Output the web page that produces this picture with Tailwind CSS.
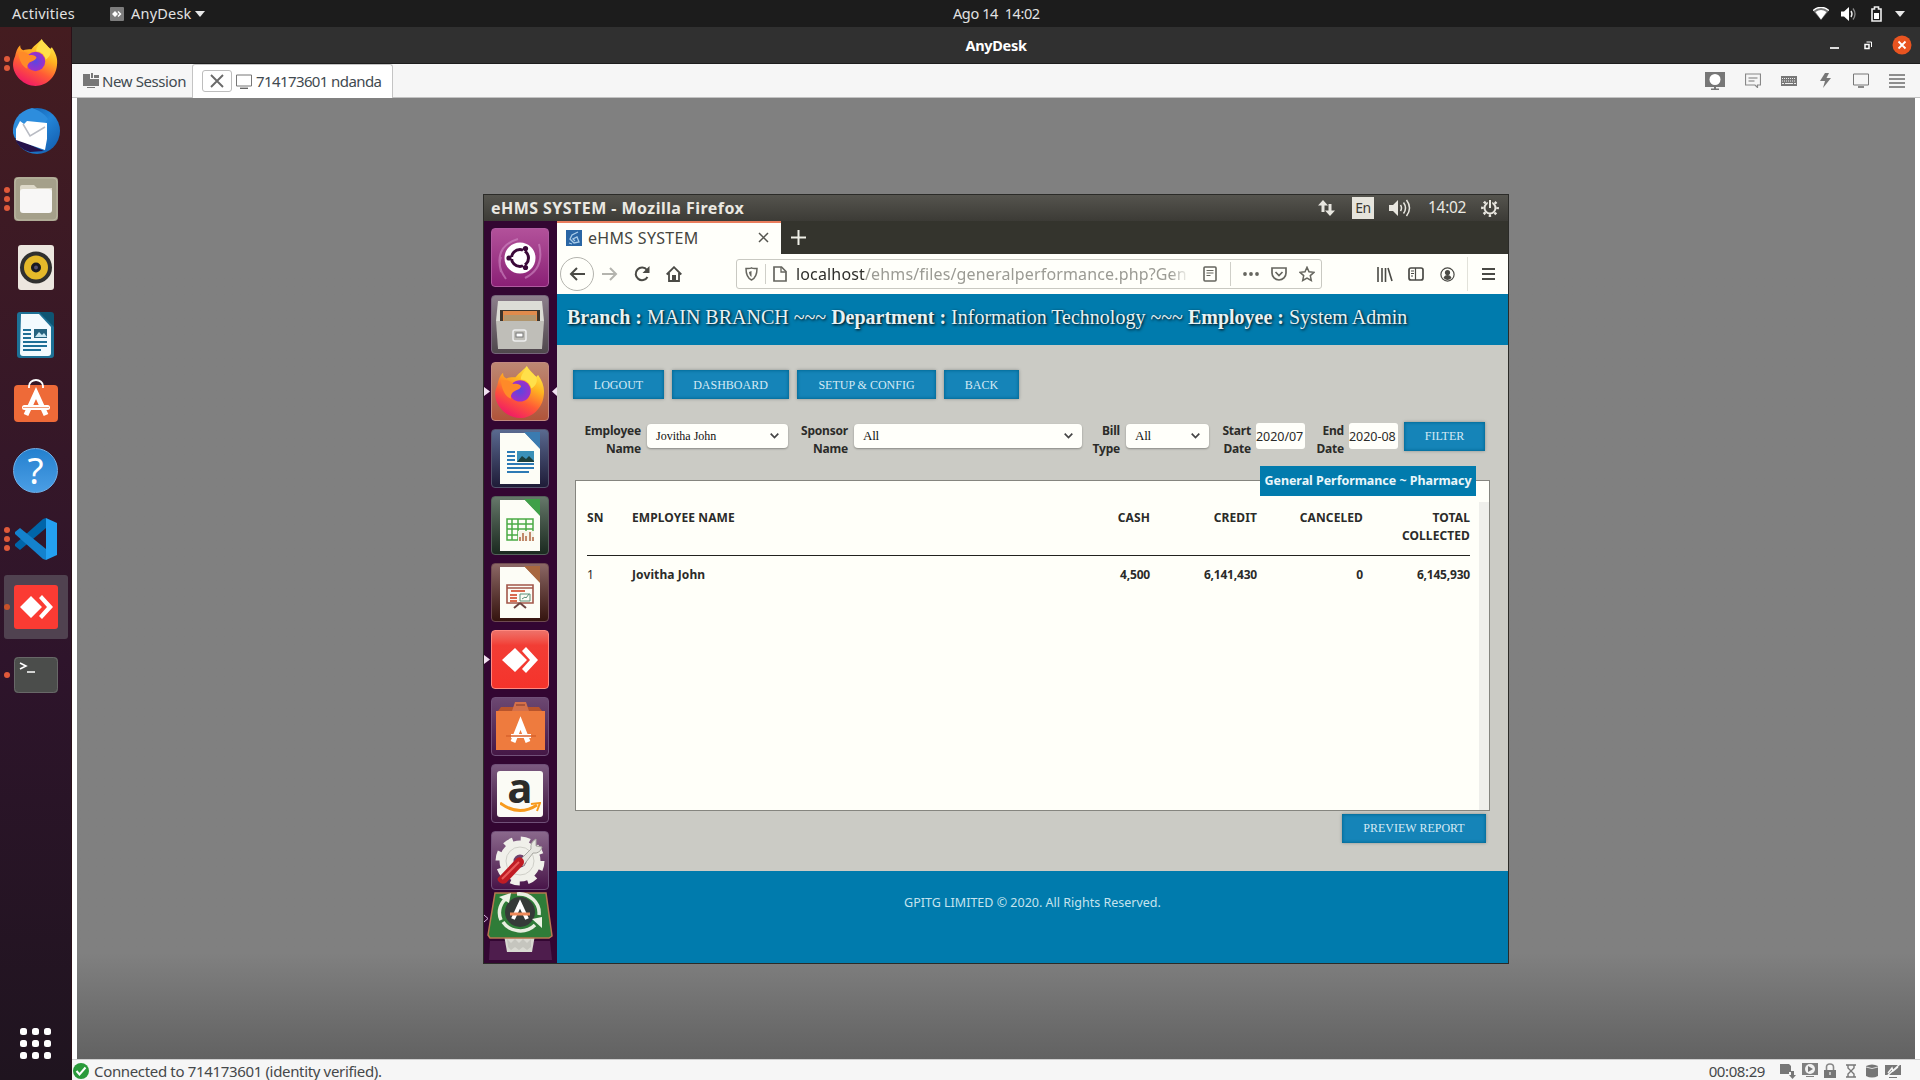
<!DOCTYPE html>
<html lang="en">
<head>
<meta charset="utf-8">
<title>AnyDesk</title>
<script src="https://cdn.jsdelivr.net/npm/@tailwindcss/browser@4"></script>
</head>
<body class="w-[1920px] h-[1080px] overflow-hidden flex flex-col bg-[#1c1c1c] font-['Noto_Sans',sans-serif] text-[15px] whitespace-nowrap">
<svg width="0" height="0" class="absolute">
  <defs>
    <linearGradient id="ffa" x1=".8" y1="0" x2=".3" y2="1"><stop offset="0" stop-color="#fff44f"/><stop offset=".35" stop-color="#ffb320"/><stop offset=".65" stop-color="#ff5a36"/><stop offset="1" stop-color="#f0156a"/></linearGradient>
    <radialGradient id="ffb"><stop offset="0" stop-color="#5b46e0"/><stop offset="1" stop-color="#a02fc8"/></radialGradient>
    <linearGradient id="tb" x1="0" y1="0" x2="1" y2="1"><stop offset="0" stop-color="#0a4f9e"/><stop offset=".5" stop-color="#2385d8"/><stop offset="1" stop-color="#1258a8"/></linearGradient>
    <symbol id="firefox" viewBox="0 0 44 46">
      <path d="M2 17C3 12 4 9 7 6c0 3 1 4 3 5 2-1 5-1 8-1C21 6 26 3 28 0c2 4 6 6 8 10l2-2c4 6 6 11 5 18-1 11-10 20-21 20S0 36 0 25c0-3 1-6 2-8z" fill="url(#ffa)"/>
      <circle cx="22" cy="22" r="9.500" fill="url(#ffb)"/>
      <path d="M5 13c5-1 9 0 11 3 3-1 6 0 7 2-1 3-4 3-7 5-2 2-2 3-2 6-5-2-8-8-9-16z" fill="#ff8a28"/>
      <path d="M28 1c-3 5-6 8-5 11 4 0 8 3 9 8 5-3 6-8 4-11-3-2-6-5-8-8z" fill="#ffe04a"/>
    </symbol>
  </defs>
</svg>

<!-- GNOME top bar -->
<header class="h-[27px] shrink-0 flex items-center text-[#e2e2e2] text-[14.5px] relative">
  <span class="ml-3 w-[98px] tracking-[0.25px]">Activities</span>
  <svg class="w-[14px] h-[14px]" viewBox="0 0 14 14"><rect width="14" height="14" rx="1" fill="#7d7d7d"/><path d="M2 7l3-3 3 3-3 3zM8.500 4l3 3-3 3-1-1 2-2-2-2z" fill="#fff"/></svg>
  <span class="ml-[7px] w-[57px] tracking-[0.2px]">AnyDesk</span>
  <svg class="ml-[7px] w-[10px] h-[6px]" viewBox="0 0 10 6"><path d="M0 0h10L5 6z" fill="#e8e8e8"/></svg>
  <span class="ml-[748px] tracking-[-0.4px] whitespace-pre">Ago 14  14:02</span>
  <div class="ml-auto flex items-center pr-[15px]">
    <svg class="w-4 h-[13px]" viewBox="0 0 16 13"><path d="M0 3.500Q8-3 16 3.500L8 13z" fill="#777"/><path d="M2.500 5Q8 1 13.500 5L8 12.500z" fill="#fff"/><path d="M0 3.500Q8-3 16 3.500" stroke="#fff" stroke-width="1.300" fill="none"/></svg>
    <svg class="ml-3 w-4 h-[14px]" viewBox="0 0 16 14"><path d="M0 4.500h3L8 0v14L3 9.500H0z" fill="#fff"/><path d="M10 4q2 3 0 6" stroke="#eee" stroke-width="1.400" fill="none"/><path d="M12 1.500q4 5.500 0 11" stroke="#888" stroke-width="1.300" fill="none"/></svg>
    <svg class="ml-[14px] w-[11px] h-4" viewBox="0 0 11 16"><path d="M1 3h2.500V1h4v2H10v12H1z" fill="none" stroke="#eee" stroke-width="1.600"/><path d="M3 7h5v6H3z" fill="#fff"/></svg>
    <svg class="ml-[13px] w-[10px] h-[6px]" viewBox="0 0 10 6"><path d="M0 0h10L5 6z" fill="#e8e8e8"/></svg>
  </div>
</header>

<div class="flex-1 flex min-h-0">
  <!-- Dock -->
  <nav class="w-[72px] shrink-0 pt-[1px] flex flex-col items-center bg-linear-to-b from-[#441c20] via-[#2e142b] via-60% to-[#1f141f] border-r border-[#2a1018]">
    <div class="relative w-full h-[68px] flex items-center justify-center"><i class="absolute left-[4px] top-[28px] w-[6px] h-[6px] rounded-full bg-[#e0593a]"></i><i class="absolute left-[4px] top-[37px] w-[6px] h-[6px] rounded-full bg-[#e0593a]"></i>
      <svg class="w-[45px] h-[47px]"><use href="#firefox"/></svg></div>
    <div class="w-full h-[68px] flex items-center justify-center">
      <svg class="w-12 h-12 mt-[2px]" viewBox="0 0 48 48"><circle cx="25" cy="24" r="23" fill="url(#tb)"/><path d="M20 1C6 4 0 15 1 26c2 8 7 12 12 15L36 12C32 6 26 3 20 1z" fill="#2d8ddd"/><path d="M3 31q3 11 15 14l14-1z" fill="#25124a"/><path d="M8 14l4 3 3-3 20 2v16l-2 11L4 33V22z" fill="#fff"/><path d="M11 17l7 12 15-9" fill="none" stroke="#b9bcc4" stroke-width="1.500"/></svg></div>
    <div class="relative w-full h-[68px] flex items-center justify-center"><i class="absolute left-[4px] top-[23px] w-[6px] h-[6px] rounded-full bg-[#e0593a]"></i><i class="absolute left-[4px] top-[32px] w-[6px] h-[6px] rounded-full bg-[#e0593a]"></i><i class="absolute left-[4px] top-[41px] w-[6px] h-[6px] rounded-full bg-[#e0593a]"></i>
      <svg class="w-11 h-11 mt-[2px]" viewBox="0 0 44 44"><rect width="44" height="44" rx="4" fill="#a5a08a"/><rect x="1" y="1" width="42" height="42" rx="4" fill="none" stroke="#bcb8a4"/><path d="M6 10q0-2 2-2h12l3 3h15v6H6z" fill="#ddd8c8"/><rect x="6" y="12" width="32" height="24" rx="3" fill="#f8f7f6"/></svg></div>
    <div class="w-full h-[68px] flex items-center justify-center">
      <svg class="w-9 h-[45px] mt-[2px]" viewBox="0 0 36 45"><rect width="36" height="45" rx="3" fill="#ece6df"/><circle cx="18" cy="22.500" r="16" fill="#30302f"/><circle cx="18" cy="22.500" r="12" fill="#e5b92a"/><circle cx="18" cy="22.500" r="5" fill="#1a1a22"/><circle cx="18" cy="22.500" r="2" fill="#54506e"/></svg></div>
    <div class="w-full h-[68px] flex items-center justify-center">
      <svg class="w-[37px] h-[46px] mt-px" viewBox="0 0 37 46"><path d="M3 0h20l14 14v29q0 3-3 3H3q-3 0-3-3V3q0-3 3-3z" fill="#1d7196"/><path d="M4 2h18l12 13v26q0 3-3 3H6q-3 0-3-3z" fill="#f2fafe"/><path d="M22 0l15 15V3q0-3-3-3z" fill="#0e5472"/><path d="M6 18h8M6 22h8M6 26h8M6 30h24M6 34h24M6 38h18" stroke="#1f6f96" stroke-width="2"/><rect x="17" y="17" width="13" height="9" fill="#24627e"/><path d="M18 25l4-5 3 3 2-2 3 4z" fill="#c8e6f0"/></svg></div>
    <div class="w-full h-[68px] flex items-center justify-center">
      <svg class="w-11 h-[43px] mb-[4px]" viewBox="0 0 44 43"><rect y="6" width="44" height="37" rx="4" fill="#ee6a38"/><path d="M15 9V7a7 6 0 0 1 14 0v2" fill="none" stroke="#fff" stroke-width="1.800"/><path d="M12 36L22 14l10 22" fill="none" stroke="#fff" stroke-width="5"/><rect x="8" y="26" width="28" height="5" rx="2.500" fill="#fff"/><path d="M9 28.500h26" stroke="#f3a07c"/></svg></div>
    <div class="w-full h-[68px] flex items-center justify-center"><div class="w-[45px] h-[45px] rounded-full bg-linear-to-b from-[#2380cf] to-[#4a9ee4] border border-[#6fb0ea] text-white text-[37px] leading-[42px] text-center">?</div></div>
    <div class="relative w-full h-[68px] flex items-center justify-center"><i class="absolute left-[4px] top-[23px] w-[6px] h-[6px] rounded-full bg-[#e0593a]"></i><i class="absolute left-[4px] top-[32px] w-[6px] h-[6px] rounded-full bg-[#e0593a]"></i><i class="absolute left-[4px] top-[41px] w-[6px] h-[6px] rounded-full bg-[#e0593a]"></i>
      <svg class="w-[42px] h-[42px] mt-[2px]" viewBox="0 0 42 42"><path d="M31 0v10L5 32l-5-4v-2L28 1z" fill="#0065a9"/><path d="M31 42V31L5 10l-5 4v2l28 25z" fill="#1482cd"/><path d="M31 0l11 5v32l-11 5z" fill="#24a0f0"/></svg></div>
    <div class="relative w-full h-[68px] flex items-center justify-center">
      <div class="w-16 h-16 mt-px rounded-[3px] bg-[#504250] flex items-center justify-center"><svg class="w-11 h-11" viewBox="0 0 44 44"><rect width="44" height="44" rx="3" fill="#fb3b33"/><path d="M6 22l11-11 11 11-11 11zM25 13l3-3 11 12-11 12-3-3 8-9z" fill="#fff"/></svg></div><i class="absolute left-[4px] top-[32px] w-[6px] h-[6px] rounded-full bg-[#c8522a]"></i></div>
    <div class="relative w-full h-[68px] flex items-center justify-center"><i class="absolute left-[4px] top-[32px] w-[6px] h-[6px] rounded-full bg-[#e0593a]"></i>
      <svg class="w-11 h-9 mt-[2px]" viewBox="0 0 44 36"><rect width="44" height="36" rx="4" fill="#4b4d4b"/><rect x=".5" y=".5" width="43" height="35" rx="4" fill="none" stroke="#686868"/><path d="M6 6l6 3-6 3M13 15h8" fill="none" stroke="#fff" stroke-width="1.600"/></svg></div>
    <svg class="w-[31px] h-[31px] mt-auto mb-[21px]" viewBox="0 0 31 31" fill="#fff"><rect width="7" height="7" rx="2.500"/><rect x="12" width="7" height="7" rx="2.500"/><rect x="24" width="7" height="7" rx="2.500"/><rect y="12" width="7" height="7" rx="2.500"/><rect x="12" y="12" width="7" height="7" rx="2.500"/><rect x="24" y="12" width="7" height="7" rx="2.500"/><rect y="24" width="7" height="7" rx="2.500"/><rect x="12" y="24" width="7" height="7" rx="2.500"/><rect x="24" y="24" width="7" height="7" rx="2.500"/></svg>
  </nav>

  <!-- AnyDesk window -->
  <section class="flex-1 min-w-0 flex flex-col bg-white">
    <div class="h-[37px] shrink-0 bg-[#303030] border-b border-[#1d1d1d] flex items-center text-white">
      <span class="w-[122px] flex-none ml-[863px] mt-[2px] text-center font-bold text-[14.500px] tracking-[-0.3px]">AnyDesk</span>
      <div class="ml-auto flex items-center pr-[8px]">
        <svg class="w-[9px] h-[2px] mt-[5px]"><rect width="9" height="2" fill="#ddd"/></svg>
        <svg class="ml-[25px] w-[8px] h-[9px]" viewBox="0 0 8 9"><path d="M1 3.500h4v4H1z" fill="none" stroke="#fff" stroke-width="1.500"/><path d="M2.500 1H7.500V6" fill="none" stroke="#fff"/></svg>
        <svg class="ml-[20px] w-5 h-5" viewBox="0 0 20 20"><circle cx="10" cy="10" r="9.500" fill="#e95420"/><path d="M6.500 6.500l7 7M13.500 6.500l-7 7" stroke="#fff" stroke-width="1.800"/></svg>
      </div>
    </div>
    <div class="h-[34px] shrink-0 bg-[#f6f6f6] border-b border-[#c2c2c2] flex text-[#414a50]">
      <div class="w-[120px] pl-[11px] flex items-center">
        <svg class="w-4 h-[15px]" viewBox="0 0 16 15" fill="#777"><path d="M0 1h7v5h9v7H0z"/><path d="M8 0h2v5H8zM11 2h5v3h-5zM4 14h8v1H4z"/></svg>
        <span class="ml-[3px] mt-px tracking-[-0.4px]">New Session</span>
      </div>
      <div class="w-[201px] h-[34px] bg-white border-x border-t border-[#c4c4c4] rounded-t-[3px] flex items-center pl-[9px] pb-px">
        <div class="w-[30px] h-[22px] border border-[#bdbdbd] rounded-[3px] flex items-center justify-center"><svg class="w-[14px] h-[14px]" viewBox="0 0 14 14"><path d="M1 1l12 12M13 1L1 13" stroke="#6a6a6a" stroke-width="1.900"/></svg></div>
        <svg class="ml-[4px] w-4 h-[15px]" viewBox="0 0 16 15"><path d="M.5 1h15v11H.5z" fill="none" stroke="#777"/><path d="M4 14.300h8" stroke="#666" stroke-width="1.400"/></svg>
        <span class="ml-[4px] tracking-[-0.6px]">714173601 ndanda</span>
      </div>
      <div class="ml-auto flex items-center pr-[15px] text-[#6f6f6f]">
        <svg class="w-5 h-[18px]" viewBox="0 0 20 18"><path d="M0 0h20v15H0zM6 16.500h8V18H6zM9 14h2v3H9z" fill="#777"/><circle cx="10" cy="7.500" r="5.500" fill="#fff"/></svg>
        <svg class="ml-[20px] w-4 h-[15px]" viewBox="0 0 16 15"><path d="M.5 1h15v11h-3v2.500L10 12H.5z" fill="none" stroke="#888" stroke-width="1.200"/><path d="M3.500 5h9M3.500 8h6" stroke="#777"/></svg>
        <svg class="ml-[20px] w-4 h-[10px]" viewBox="0 0 16 10"><rect width="16" height="10" fill="#777"/><path d="M1 2.500h14M1 5h14" stroke="#eee" stroke-dasharray="1 1"/><path d="M1 7.500h2M4 7.500h8M13 7.500h2" stroke="#eee"/></svg>
        <svg class="ml-[23px] w-[11px] h-[15px]" viewBox="0 0 11 15"><path d="M5 0h4L6.500 5H11L3 15l2-7H0z" fill="#777"/></svg>
        <svg class="ml-[22px] w-4 h-[15px]" viewBox="0 0 16 15"><path d="M.5 1h15v11H.5z" fill="none" stroke="#777"/><path d="M5 14h6" stroke="#666" stroke-width="1.500"/></svg>
        <svg class="ml-[20px] w-4 h-[14px]" viewBox="0 0 16 14"><path d="M0 1h16M0 5h16M0 9h16M0 13h16" stroke="#6c6c6c" stroke-width="1.600"/></svg>
      </div>
    </div>

    <!-- Remote screen -->
    <div class="h-[961px] shrink-0 ml-[5px] mr-[5px] pl-[406px] pt-[96px] bg-linear-to-b from-[#808080] from-89% to-[#626262]">
      <main class="w-[1026px] h-[770px] flex flex-col border border-[#2b2b28] overflow-hidden">
        <div class="h-[26px] shrink-0 bg-linear-to-b from-[#55544e] to-[#3c3b36] flex items-center text-[#ebe9e2] pl-[7px] pr-[9px]">
          <span class="font-bold text-[16px] tracking-[0.45px]">eHMS SYSTEM - Mozilla Firefox</span>
          <svg class="ml-auto w-[17px] h-[16px]" viewBox="0 0 17 16" fill="#e8e6df"><path d="M5 0l5 5.500H6.500V12h-3V5.500H0zM12 16l5-5.500h-3.500V4h-3v6.500H7z"/></svg>
          <span class="ml-[17px] w-[22px] h-[22px] bg-[#e6e4dc] text-[#3b3a35] text-[14px] leading-[22px] text-center tracking-[-0.5px]">En</span>
          <svg class="ml-[15px] w-[22px] h-[18px]" viewBox="0 0 22 18"><path d="M0 6h4l5-5v16l-5-5H0z" fill="#e8e6df"/><path d="M11.500 6q2 3 0 6M14.500 3.500q4 5.500 0 11M17.500 1q6 8 0 16" fill="none" stroke="#e8e6df" stroke-width="1.500"/></svg>
          <span class="ml-[17px] w-[39px] text-[15.500px] tracking-[-0.3px]">14:02</span>
          <svg class="ml-[14px] w-[18px] h-[18px]" viewBox="0 0 18 18"><circle cx="9" cy="9" r="5.500" fill="none" stroke="#e8e6df" stroke-width="2"/><circle cx="9" cy="9" r="7.600" fill="none" stroke="#e8e6df" stroke-width="2.600" stroke-dasharray="2.400 3.570" stroke-dashoffset="1.200"/><path d="M9 0v7" stroke="#48473f" stroke-width="4.500"/><path d="M9 1v8" stroke="#e8e6df" stroke-width="2"/></svg>
        </div>
        <div class="flex-1 flex min-h-0">
          <!-- Unity launcher -->
          <aside class="relative w-[73px] shrink-0 pt-[7px] pl-[7px] bg-[#330632] flex flex-col gap-2">
            <svg class="absolute left-0 top-[166px] w-[6px] h-[9px]" viewBox="0 0 6 9"><path d="M0 0l6 4.500L0 9z" fill="#f0e0f0"/></svg>
            <svg class="absolute left-[68px] top-[166px] w-[5px] h-[9px]" viewBox="0 0 5 9"><path d="M5 0L0 4.500 5 9z" fill="#f0e0f0"/></svg>
            <svg class="absolute left-0 top-[434px] w-[6px] h-[9px]" viewBox="0 0 6 9"><path d="M0 0l6 4.500L0 9z" fill="#f0e0f0"/></svg>
            <svg class="absolute left-0 top-[693px] w-[5px] h-[9px]" viewBox="0 0 5 9"><path d="M0 1l4 3.500L0 8" fill="none" stroke="#d8b8e0"/></svg>
            <div class="w-[58px] h-[59px] shrink-0 rounded-[4px] border border-[#b05aa0] bg-linear-to-b from-[#b2519a] to-[#8b1f76] flex items-center justify-center">
              <svg class="w-[48px] h-[48px]" viewBox="0 0 48 48"><path d="M5 38Q-2 12 22 5M43 10q6 24-14 34M10 45q-9-12-5-22" fill="none" stroke="#d08cc4" stroke-width="2" opacity=".6"/><circle cx="24" cy="24" r="15.500" fill="#fff"/><circle cx="24" cy="24" r="8.500" fill="none" stroke="#3a0838" stroke-width="3"/><path d="M24 24l-12 0M24 24l6-11M24 24l6 11" stroke="#fff" stroke-width="2"/><circle cx="24" cy="24" r="6" fill="#fff"/><circle cx="13" cy="24" r="2.600" fill="#3a0838"/><circle cx="29.500" cy="14.500" r="2.600" fill="#3a0838"/><circle cx="29.500" cy="33.500" r="2.600" fill="#3a0838"/></svg></div>
            <div class="w-[58px] h-[59px] shrink-0 rounded-[4px] border border-[#75647a] bg-linear-to-b from-[#8d7f8c] to-[#4f474c] flex items-center justify-center">
              <svg class="w-[50px] h-[52px]" viewBox="0 0 50 52"><path d="M3 2h44l2 20H1z" fill="#dcdcd6"/><path d="M5 11h40v11H5z" fill="#3c342a"/><path d="M8 12h34v10H8z" fill="#e08b4c"/><path d="M9 16h32v6H9z" fill="#b0966e"/><path d="M1 22h48l-2 28H3z" fill="#bfbeb8"/><rect x="18" y="31" width="13" height="11" rx="2" fill="none" stroke="#eee" stroke-width="1.500"/><rect x="21" y="34" width="7" height="4" fill="#fff" stroke="#777"/></svg></div>
            <div class="w-[58px] h-[59px] shrink-0 rounded-[4px] border border-[#c28a80] bg-linear-to-b from-[#bd8873] to-[#b0543a] flex items-center justify-center">
              <svg class="w-[50px] h-[52px]"><use href="#firefox"/></svg></div>
            <div class="w-[58px] h-[59px] shrink-0 rounded-[4px] border border-[#54546c] bg-linear-to-b from-[#5a6a90] to-[#1f1c38] flex items-center justify-center">
              <svg class="w-[42px] h-[53px]" viewBox="0 0 42 53"><path d="M1 1h25l15 15v36H1z" fill="#fdfdf6"/><path d="M25 0h16v17z" fill="#3b7bb0"/><path d="M8 20h8M8 24h8M8 28h8M8 32h27M8 36h27M8 40h22" stroke="#2d7ab5" stroke-width="2"/><rect x="18" y="19" width="17" height="11" fill="#3a90b8"/><path d="M18 30l5-6 4 3 3-3 5 5v1z" fill="#1c3f3c"/></svg></div>
            <div class="w-[58px] h-[59px] shrink-0 rounded-[4px] border border-[#54605a] bg-linear-to-b from-[#66786a] to-[#1b2a20] flex items-center justify-center">
              <svg class="w-[42px] h-[53px]" viewBox="0 0 42 53"><path d="M1 1h25l15 15v36H1z" fill="#fdfdf6"/><path d="M25 0h16v17z" fill="#3fa048"/><path d="M8 20h26v21H8zM8 25h26M8 30h26M8 36h26M13 20v21M19 20v21M27 20v12" fill="none" stroke="#4bab45" stroke-width="1.500"/><rect x="19" y="32" width="16" height="10" fill="#f6f4ea"/><path d="M21 42v-4M24 42v-8M27 42v-5M31 42v-9M34 42v-4" stroke="#c0876a" stroke-width="2"/></svg></div>
            <div class="w-[58px] h-[59px] shrink-0 rounded-[4px] border border-[#6e4a50] bg-linear-to-b from-[#8c6866] to-[#35140f] flex items-center justify-center">
              <svg class="w-[42px] h-[53px]" viewBox="0 0 42 53"><path d="M1 1h25l15 15v36H1z" fill="#fdfdf6"/><path d="M25 0h16v17z" fill="#a8673e"/><path d="M8 19h26v18H8zM8 22h26" fill="none" stroke="#a2574a" stroke-width="1.600"/><path d="M12 25h14M11 29h7M11 32h7M11 35h7" stroke="#d96c50" stroke-width="2"/><path d="M21 28h10v7H21zM23 33l3-2 1 1 3-4" fill="none" stroke="#5d9077"/><path d="M21 37l-6 5M21 37l6 5" stroke="#6d4440" stroke-width="2"/></svg></div>
            <div class="w-[58px] h-[59px] shrink-0 rounded-[4px] border border-[#ff8a80] bg-linear-to-b from-[#ee7068] via-[#f23d35] via-25% to-[#f5332b] flex items-center justify-center">
              <svg class="w-[36px] h-[26px]" viewBox="0 0 36 26"><path d="M0 13L13 1l12 12-12 12zM20 4l4-4 12 13-12 13-4-4 8-9z" fill="#fff"/></svg></div>
            <div class="w-[58px] h-[59px] shrink-0 rounded-[4px] border border-[#705078] bg-linear-to-b from-[#6c4872] to-[#451746] flex items-end justify-center pb-[4px]">
              <svg class="w-[49px] h-[50px]" viewBox="0 0 49 50"><path d="M0 10h49v39H0z" fill="#ee7b3e"/><path d="M2 10l3-4h38l3 4z" fill="#b8542c"/><path d="M16 10l3-9h11l3 9z" fill="#d4704a"/><path d="M20 4h9" stroke="#803828"/><path d="M17 41l7.500-19L32 41" fill="none" stroke="#fff" stroke-width="5"/><path d="M15 35h20" stroke="#fff" stroke-width="4"/><path d="M10 35h30" stroke="#d9622c" stroke-width="1.500"/></svg></div>
            <div class="w-[58px] h-[59px] shrink-0 rounded-[4px] border border-[#705078] bg-linear-to-b from-[#7c5a80] to-[#3c123c] flex items-center justify-center">
              <div class="relative w-[46px] h-[46px] rounded-[3px] bg-[#fbfbf5] text-center text-[#2c2c2a] text-[42px] leading-[31px] font-bold font-['Open_Sans',sans-serif]">a<svg class="absolute left-[3px] top-[31px] w-[41px] h-[12px]" viewBox="0 0 41 12"><path d="M0 1q19 14 37 2" fill="none" stroke="#f79a1c" stroke-width="3"/><path d="M31 2l9-1-3 8" fill="none" stroke="#f79a1c" stroke-width="2"/></svg></div></div>
            <div class="w-[58px] h-[59px] shrink-0 rounded-[4px] border border-[#705078] bg-linear-to-b from-[#8a688c] to-[#481449] flex items-center justify-center">
              <svg class="w-[50px] h-[50px]" viewBox="0 0 50 50"><circle cx="25" cy="25" r="13.500" fill="none" stroke="#f0f0ea" stroke-width="14"/><circle cx="25" cy="25" r="21.500" fill="none" stroke="#f0f0ea" stroke-width="6" stroke-dasharray="9 7.900"/><circle cx="25" cy="25" r="14" fill="none" stroke="#cfcfc8"/><path d="M22 27L36 13q-1-7 5-10l0 7 6 1q-2 7-9 6L28 30z" fill="#e6e6e0" stroke="#a8a8a2"/><path d="M4 41l18-19q4-2 6 1t0 6L11 47q-4 2-7-1t0-5z" fill="#c01c24"/><path d="M7 43l17-17" stroke="#e85a5a" stroke-width="2"/></svg></div>
            <svg class="absolute left-0 top-[664px] w-[73px] h-[77px]" viewBox="0 0 73 77"><path d="M6 56l-1 19h63l-2-19z" fill="#5a2858" opacity=".7"/><path d="M20 50h31l-3 17H23z" fill="#d9d9d2"/><path d="M23 54l4 4 4-4 4 4 4-4 4 4 4-4v8l-4 3-4-3-4 3-4-3-4 3-3-3z" fill="#c5c5be"/><path d="M11 8h51l6 43-3 2H6l-2-3z" fill="#2f7c38" stroke="#b87850" stroke-width="1.500"/><circle cx="36" cy="27" r="15" fill="#353a38"/><path d="M17 35A20 19 0 0 1 24 12M33 9a20 19 0 0 1 22 21M51 40a20 18 0 0 1-32-3" fill="none" stroke="#e8eee0" stroke-width="3.500"/><path d="M15 12l12-4-2 10zM48 34l10-2 0 11z" fill="#eef4e6"/><path d="M29 34l7-15 7 15" fill="none" stroke="#fff" stroke-width="4"/><path d="M26 29h20" stroke="#ee8a5a" stroke-width="3"/></svg>
          </aside>

          <!-- Firefox -->
          <div class="flex-1 min-w-0 flex flex-col bg-[#cbcbc5]">
            <div class="h-[33px] shrink-0 bg-[#34342d] flex items-center text-[#45453f]">
              <div class="w-[224px] h-[33px] bg-[#fffffa] border-t-2 border-[#ea7d5c] flex items-center pl-[9px] pb-[2px]">
                <svg class="w-4 h-4" viewBox="0 0 16 16"><rect width="16" height="16" fill="#2a66a5"/><path d="M12 2L6 5 4 9l4 4 5-1-2-5-4 2 2 2M3 13l3 1" fill="none" stroke="#a8cbe8" stroke-width="1.300"/></svg>
                <span class="ml-[6px] text-[16px] tracking-[0.3px]">eHMS SYSTEM</span>
                <svg class="ml-auto mr-[12px] w-[11px] h-[11px]" viewBox="0 0 11 11"><path d="M1 1l9 9M10 1l-9 9" stroke="#55554f" stroke-width="1.500"/></svg>
              </div>
              <svg class="ml-[10px] mb-px w-[15px] h-[15px]" viewBox="0 0 15 15"><path d="M7.500 0v15M0 7.500h15" stroke="#f0f0e8" stroke-width="2"/></svg>
            </div>
            <div class="h-[40px] shrink-0 bg-[#fffffa] flex items-center pl-[3px] pr-[13px] text-[#4a4a45]">
              <div class="w-[34px] h-[34px] rounded-full border border-[#b4b4ae] flex items-center justify-center"><svg class="w-4 h-[14px]" viewBox="0 0 16 14"><path d="M8 1L2 7l6 6M2 7h14" fill="none" stroke="currentColor" stroke-width="2"/></svg></div>
              <svg class="ml-[8px] w-4 h-[14px]" viewBox="0 0 16 14"><path d="M8 1l6 6-6 6M14 7H0" fill="none" stroke="#b4b4ae" stroke-width="2"/></svg>
              <svg class="ml-[16px] w-4 h-4" viewBox="0 0 16 16"><path d="M13 4A6.300 6.300 0 1 0 13.500 11" fill="none" stroke="currentColor" stroke-width="2"/><path d="M15.500 0v7h-7z" fill="currentColor"/></svg>
              <svg class="ml-[16px] w-4 h-4" viewBox="0 0 16 16"><path d="M.7 8.500L8 1.200l7.300 7.300M3 7v8h10V7" fill="none" stroke="currentColor" stroke-width="1.800"/><path d="M6 9h4v6H6z" fill="currentColor"/></svg>
              <div class="ml-[54px] w-[586px] h-[30px] rounded-[3px] border border-[#c9c9c2] flex items-center pl-[8px] pr-[6px]">
                <svg class="w-[13px] h-[14px]" viewBox="0 0 13 14"><path d="M1 1.500q5 0 5.500-.5.500.5 5.500.5 0 9-5.500 11.500Q1 10.500 1 1.500z" fill="none" stroke="#66665f" stroke-width="1.500"/><path d="M6.500 4v6q-2-1-2.500-5z" fill="#66665f"/></svg>
                <i class="ml-[7px] w-px h-5 bg-[#cfcfc8]"></i>
                <svg class="ml-[7px] w-[14px] h-4" viewBox="0 0 14 16"><path d="M1 1h7.500L13 5.500V15H1z" fill="none" stroke="#66665f" stroke-width="1.700"/><path d="M8 1v5h5" fill="none" stroke="#66665f" stroke-width="1.300"/></svg>
                <div class="ml-[9px] w-[394px] overflow-hidden text-[16px] text-[#9b9b94] tracking-[0.15px] mask-r-from-95%"><span class="text-[#2f2f2b]">localhost</span>/ehms/files/generalperformance.php?Gen</div>
                <svg class="ml-[13px] w-[14px] h-4" viewBox="0 0 14 16"><rect x="1" y="1" width="12" height="14" rx="1" fill="none" stroke="#66665f" stroke-width="1.600"/><path d="M3.500 4.500h7M3.500 7h7M3.500 9.500h4" stroke="#66665f"/></svg>
                <i class="ml-[13px] w-px h-6 bg-[#cfcfc8]"></i>
                <svg class="ml-[12px] w-4 h-4" viewBox="0 0 16 4" fill="#66665f"><circle cx="2" cy="2" r="1.900"/><circle cx="8" cy="2" r="1.900"/><circle cx="14" cy="2" r="1.900"/></svg>
                <svg class="ml-[12px] w-4 h-[14px]" viewBox="0 0 16 14"><path d="M1 1h14v5a7 7 0 0 1-14 0z" fill="none" stroke="#66665f" stroke-width="1.700"/><path d="M4.500 5L8 8.500 11.500 5" fill="none" stroke="#66665f" stroke-width="1.700"/></svg>
                <svg class="ml-[12px] w-4 h-4" viewBox="0 0 16 16"><path d="M8 1.300l2 4.500 5 .5-3.700 3.300 1 4.900L8 12l-4.300 2.500 1-4.900L1 6.300l5-.5z" fill="none" stroke="#66665f" stroke-width="1.500"/></svg>
              </div>
              <svg class="ml-auto w-4 h-[15px]" viewBox="0 0 16 15"><path d="M1 0v15M5 1v14M8.500 1v14M11 1l4 13" stroke="currentColor" stroke-width="1.600"/></svg>
              <svg class="ml-[15px] w-4 h-[14px]" viewBox="0 0 16 14"><rect x="1" y="1" width="14" height="12" rx="2" fill="none" stroke="currentColor" stroke-width="1.700"/><path d="M7.500 1v12M3 4h3M3 6.500h3M3 9h2" stroke="currentColor" stroke-width="1.200"/></svg>
              <svg class="ml-[16px] w-[15px] h-[15px]" viewBox="0 0 15 15"><circle cx="7.500" cy="7.500" r="6.600" fill="none" stroke="currentColor" stroke-width="1.200"/><circle cx="7.500" cy="5.500" r="2.600" fill="currentColor"/><path d="M3.500 11q1-3 4-3t4 3q-2 2-4 2t-4-2z" fill="currentColor"/></svg>
              <i class="ml-[12px] w-px h-[34px] bg-[#e2e2da]"></i>
              <svg class="ml-[14px] w-[13px] h-[12px]" viewBox="0 0 13 12"><path d="M0 1h13M0 6h13M0 11h13" stroke="currentColor" stroke-width="1.800"/></svg>
            </div>
            <div class="h-[51px] shrink-0 bg-[#007bad] text-[#e8f2f4] font-['Liberation_Serif',serif] text-[20px] leading-[47px] pl-[10px] [text-shadow:1px_1px_3px_#000]"><b>Branch : </b>MAIN BRANCH ~~~ <b>Department : </b>Information Technology ~~~ <b>Employee : </b>System Admin</div>

            <div class="flex-1 pl-4 pt-[25px] flex flex-col text-[12px] font-bold text-[#2b2b29]">
              <div class="flex gap-2 font-['Liberation_Serif',serif] font-normal text-[12px] text-[#d5eaf5] text-center leading-[30px]">
                <div class="w-[91px] h-[29px] bg-[#1584b8] shadow-[inset_0_0_3px_1px_#046c98,0_0_3px_#8a8f8d]">LOGOUT</div>
                <div class="w-[117px] h-[29px] bg-[#1584b8] shadow-[inset_0_0_3px_1px_#046c98,0_0_3px_#8a8f8d]">DASHBOARD</div>
                <div class="w-[139px] h-[29px] bg-[#1584b8] shadow-[inset_0_0_3px_1px_#046c98,0_0_3px_#8a8f8d]">SETUP &amp; CONFIG</div>
                <div class="w-[75px] h-[29px] bg-[#1584b8] shadow-[inset_0_0_3px_1px_#046c98,0_0_3px_#8a8f8d]">BACK</div>
              </div>
              <div class="mt-[23px] h-[58px] flex items-start leading-[18px] text-right tracking-[-0.2px]">
                <label class="w-[68px] shrink-0">Employee<br>Name</label>
                <div class="ml-[6px] mt-[2px] w-[141px] h-[24px] shrink-0 rounded-[4px] bg-[#fffffa] shadow-[0_1px_2px_#8a8a84] flex items-center justify-between px-[9px] font-['Liberation_Serif',serif] font-normal text-[12px] text-[#111] tracking-normal">Jovitha John<svg class="w-[9px] h-[6px]" viewBox="0 0 9 6"><path d="M.7.700L4.500 4.500 8.300.7" fill="none" stroke="#444" stroke-width="1.700"/></svg></div>
                <label class="w-[60px] shrink-0">Sponsor<br>Name</label>
                <div class="ml-[6px] mt-[2px] w-[228px] h-[24px] shrink-0 rounded-[4px] bg-[#fffffa] shadow-[0_1px_2px_#8a8a84] flex items-center justify-between px-[9px] font-['Liberation_Serif',serif] font-normal text-[13px] text-[#111]">All<svg class="w-[9px] h-[6px]" viewBox="0 0 9 6"><path d="M.7.700L4.500 4.500 8.300.7" fill="none" stroke="#444" stroke-width="1.700"/></svg></div>
                <label class="w-[38px] shrink-0">Bill<br>Type</label>
                <div class="ml-[6px] mt-[2px] w-[83px] h-[24px] shrink-0 rounded-[4px] bg-[#fffffa] shadow-[0_1px_2px_#8a8a84] flex items-center justify-between px-[9px] font-['Liberation_Serif',serif] font-normal text-[13px] text-[#111]">All<svg class="w-[9px] h-[6px]" viewBox="0 0 9 6"><path d="M.7.700L4.500 4.500 8.300.7" fill="none" stroke="#444" stroke-width="1.700"/></svg></div>
                <label class="w-[42px] shrink-0">Start<br>Date</label>
                <div class="ml-[5px] mt-px w-[49px] h-[26px] shrink-0 rounded-[3px] bg-[#fffffa] overflow-hidden text-left leading-[27px] font-normal text-[12.500px] tracking-[-0.05px]">2020/07</div>
                <label class="w-[39px] shrink-0">End<br>Date</label>
                <div class="ml-[5px] mt-px w-[49px] h-[26px] shrink-0 rounded-[3px] bg-[#fffffa] overflow-hidden text-left leading-[27px] font-normal text-[12.500px] tracking-[-0.05px]">2020-08</div>
                <div class="ml-[6px] w-[81px] h-[29px] shrink-0 text-center leading-[29px] font-['Liberation_Serif',serif] font-normal tracking-normal text-[#d5eaf5] bg-[#1584b8] shadow-[inset_0_0_3px_1px_#046c98,0_0_3px_#8a8f8d]">FILTER</div>
              </div>
              <div class="relative ml-[2px] w-[915px] h-[331px] shrink-0 bg-[#fffff9] border border-[#85857f] pl-[11px] pt-[28px]">
                <div class="absolute right-[13px] -top-[15px] w-[216px] h-[30px] bg-[#017bad] text-[#e9f6fa] text-center leading-[29px] text-[12.500px] tracking-[-0.05px]">General Performance ~ Pharmacy</div>
                <i class="absolute right-0 top-[21px] bottom-0 w-[10px] bg-[#efefeb]"></i>
                <div class="w-[883px] h-[47px] border-b border-[#22221f] grid grid-cols-[45px_411px_107px_107px_106px_107px] leading-[18px] text-right tracking-[0.1px]">
                  <span class="text-left">SN</span><span class="text-left">EMPLOYEE NAME</span><span>CASH</span><span>CREDIT</span><span>CANCELED</span><span>TOTAL<br>COLLECTED</span>
                </div>
                <div class="w-[883px] mt-[10px] grid grid-cols-[45px_411px_107px_107px_106px_107px] leading-[18px] text-right tracking-[-0.2px]">
                  <span class="text-left font-normal">1</span><span class="text-left tracking-[0.1px]">Jovitha John</span><span>4,500</span><span>6,141,430</span><span>0</span><span>6,145,930</span>
                </div>
              </div>
              <div class="ml-[769px] mt-[3px] w-[144px] h-[29px] text-center leading-[29px] font-['Liberation_Serif',serif] font-normal text-[#d5eaf5] bg-[#1584b8] shadow-[inset_0_0_3px_1px_#046c98,0_0_3px_#8a8f8d]">PREVIEW REPORT</div>
            </div>
            <footer class="h-[92px] shrink-0 bg-[#007bad] text-[#c5e3ee] text-[12.500px] text-center pt-[23px] leading-[18px]">GPITG LIMITED © 2020. All Rights Reserved.</footer>
          </div>
        </div>
      </main>
    </div>

    <!-- Status bar -->
    <div class="flex-1 bg-[#f6f6f6] border-t border-[#cfcfcf] flex items-center text-[#45484a] pl-px pr-[19px] pb-[2px]">
      <svg class="w-4 h-4" viewBox="0 0 16 16"><circle cx="8" cy="8" r="8" fill="#2a9a3a"/><path d="M3.500 8l3 3.500 6-7" fill="none" stroke="#fff" stroke-width="2"/></svg>
      <span class="ml-[5px] tracking-[-0.34px]">Connected to 714173601 (identity verified).</span>
      <span class="ml-auto tracking-[-0.4px]">00:08:29</span>
      <svg class="ml-[15px] w-4 h-4" viewBox="0 0 16 16" fill="#777"><path d="M0 1h9l2 2v6h-2v2H0zM11 8h3v4h2l-3.500 4L9 12h2z"/></svg>
      <svg class="ml-[6px] w-4 h-4" viewBox="0 0 16 16"><path d="M0 0h16v12H0zM4 13h8v1H4z" fill="#808080"/><circle cx="8" cy="6" r="5" fill="#f2f2f2"/><path d="M6 3l5 3-5 3z" fill="#777"/></svg>
      <svg class="ml-[6px] w-3 h-4" viewBox="0 0 12 16"><path d="M2.500 8V4q0-3 3.500-3t3.500 3v4" fill="none" stroke="#888" stroke-width="1.600"/><rect y="7" width="12" height="8" fill="#777"/><path d="M6 9v3" stroke="#ddd" stroke-width="1.500"/></svg>
      <svg class="ml-[10px] w-[10px] h-[14px]" viewBox="0 0 10 14"><path d="M0 1h10M0 13h10M2 1v3l6 6v3M8 1v3l-6 6v3" fill="none" stroke="#777" stroke-width="1.400"/></svg>
      <svg class="ml-[10px] w-[12px] h-[14px]" viewBox="0 0 12 14"><path d="M0 2q6-3 12 0v10q-6 3-12 0z" fill="#757575"/><path d="M0 3q6 3 12 0" fill="none" stroke="#ddd"/></svg>
      <svg class="ml-[7px] w-4 h-[15px]" viewBox="0 0 16 15"><path d="M0 1h16v10H0zM4 13h8v1H4z" fill="#777"/><path d="M3 9l4-5 1 3 5-4M1 13L15 0" stroke="#f6f6f6" fill="none" stroke-width="1.400"/></svg>
    </div>
  </section>
</div>
</body>
</html>
